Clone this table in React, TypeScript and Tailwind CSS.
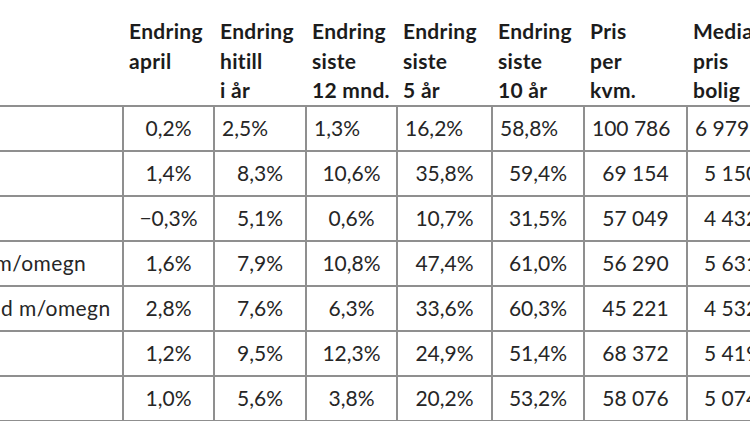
import React from "react";

type Row = { label: string; vals: string[] };

const rows: Row[] = [
  { label: "Oslo", vals: ["0,2%", "2,5%", "1,3%", "16,2%", "58,8%", "100 786", "6 979 000"] },
  { label: "Bergen", vals: ["1,4%", "8,3%", "10,6%", "35,8%", "59,4%", "69 154", "5 150 000"] },
  { label: "Tromsø", vals: ["−0,3%", "5,1%", "0,6%", "10,7%", "31,5%", "57 049", "4 432 000"] },
  { label: "Drammen m/omegn", vals: ["1,6%", "7,9%", "10,8%", "47,4%", "61,0%", "56 290", "5 631 000"] },
  { label: "Kristiansand m/omegn", vals: ["2,8%", "7,6%", "6,3%", "33,6%", "60,3%", "45 221", "4 532 000"] },
  { label: "Asker", vals: ["1,2%", "9,5%", "12,3%", "24,9%", "51,4%", "68 372", "5 419 000"] },
  { label: "Norge", vals: ["1,0%", "5,6%", "3,8%", "20,2%", "53,2%", "58 076", "5 074 000"] },
];

const headers: string[][] = [
  ["Endring", "april"],
  ["Endring", "hitill", "i år"],
  ["Endring", "siste", "12 mnd."],
  ["Endring", "siste", "5 år"],
  ["Endring", "siste", "10 år"],
  ["Pris", "per", "kvm."],
  ["Median", "pris", "bolig"],
];

const widths = ["w-[233px]", "w-[91px]", "w-[92px]", "w-[91px]", "w-[95px]", "w-[92px]", "w-[103px]", "w-[130px]"];

export default function App() {
  return (
    <div className="w-[750px] h-[421px] overflow-hidden bg-white font-['Lato','Liberation_Sans',sans-serif] text-[#262626]">
      <div className="ml-[-111px] w-[927px]">
        <table className="table-fixed border-collapse w-[927px]">
          <colgroup>
            {widths.map((w, i) => (
              <col key={i} className={w} />
            ))}
          </colgroup>
          <thead>
            <tr className="h-[104px]">
              <th className="border-b-2 border-[#8f8f8f]"></th>
              {headers.map((h, i) => (
                <th
                  key={i}
                  className="border-b-2 border-[#8f8f8f] align-top text-left pl-[6px] pt-[16px] text-[21px] tracking-[0.3px] leading-[29.5px] font-bold text-[#1c1c1c] whitespace-nowrap"
                >
                  {h.map((line, j) => (
                    <div key={j}>{line}</div>
                  ))}
                </th>
              ))}
            </tr>
          </thead>
          <tbody>
            {rows.map((r, ri) => (
              <tr key={ri} className="h-[45px]">
                <td className="border-2 border-[#8f8f8f] pl-[4px] text-left text-[21px] tracking-[0.4px] whitespace-nowrap">
                  {r.label}
                </td>
                {r.vals.map((v, vi) => (
                  <td
                    key={vi}
                    className={
                      ri === 0 && vi > 0
                        ? "border-2 border-[#8f8f8f] text-left pl-[7px] text-[21px] whitespace-nowrap"
                        : "border-2 border-[#8f8f8f] text-center text-[21px] whitespace-nowrap"
                    }
                  >
                    {v}
                  </td>
                ))}
              </tr>
            ))}
          </tbody>
        </table>
      </div>
    </div>
  );
}
